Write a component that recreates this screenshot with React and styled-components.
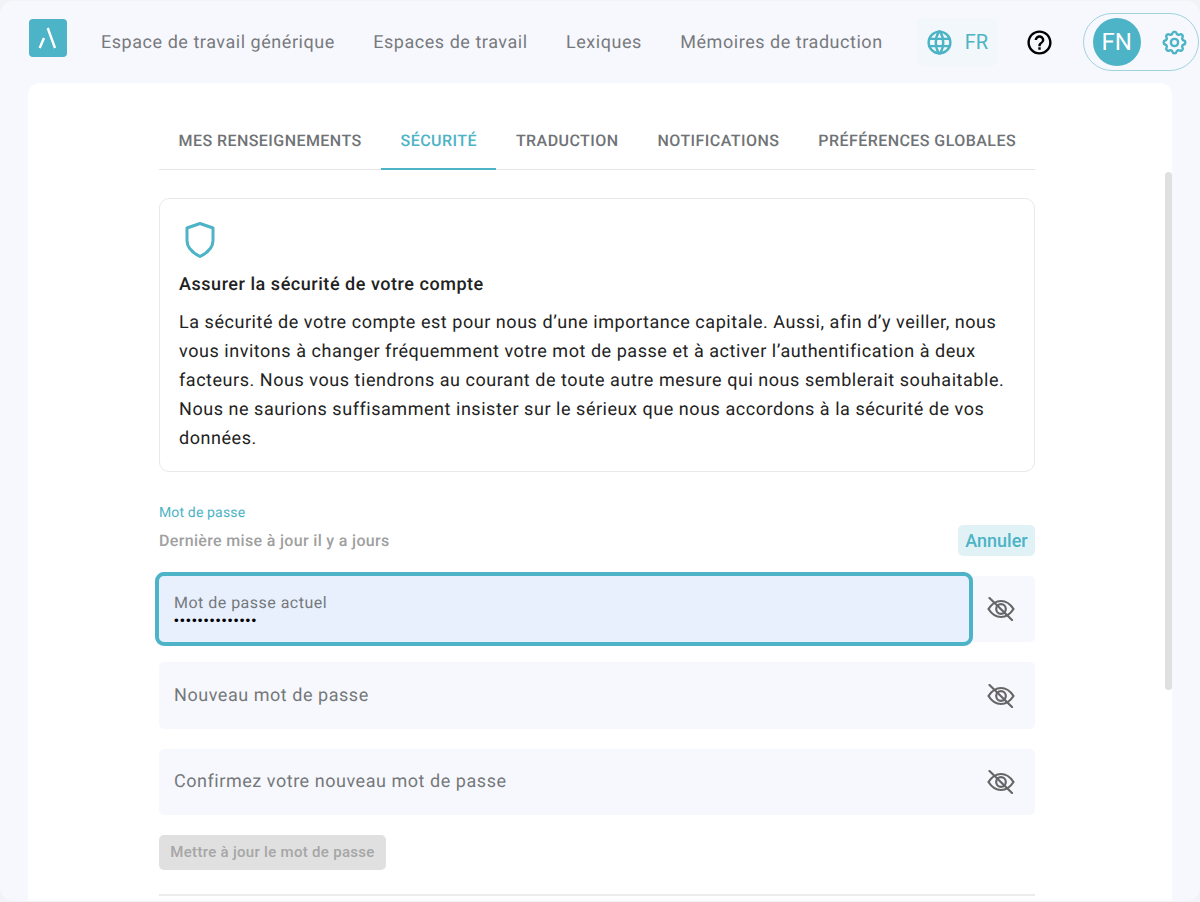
import React from 'react'
import styled, { createGlobalStyle } from 'styled-components'
import { TbWorld, TbSettings } from 'react-icons/tb'
import { MdHelpOutline } from 'react-icons/md'

const teal = '#4db3c6'

const GlobalStyle = createGlobalStyle`
  * {
    box-sizing: border-box;
  }
  html, body {
    margin: 0;
    height: 902px;
    overflow: hidden;
    background: #f3f3f7;
    font-family: Roboto, 'Liberation Sans', sans-serif;
    text-rendering: geometricPrecision;
  }
`
const Page = styled.div`
  display: flex;
  flex-direction: column;
  height: 900px;
  margin-top: 1px;
  border-radius: 14px;
  background: #f7f8fd;
`
const Header = styled.header`
  display: flex;
  align-items: center;
  height: 82px;
  padding: 0 1px 0 29px;
`
const Logo = styled.div`
  display: flex;
  align-items: center;
  justify-content: center;
  flex-shrink: 0;
  width: 38px;
  height: 38px;
  margin: 0 34px 8px 0;
  border-radius: 4px;
  background: ${teal};
`
const Nav = styled.nav`
  display: flex;
  flex-shrink: 0;
  gap: 38.4px;
  margin-right: 34px;
  padding-top: 2px;
`
const NavLink = styled.a`
  color: #777a7d;
  font-size: 18px;
  line-height: 24px;
  letter-spacing: 0.03em;
  white-space: nowrap;
`
const LangButton = styled.button`
  display: flex;
  align-items: center;
  flex-shrink: 0;
  gap: 11px;
  width: 80px;
  height: 48px;
  padding: 0 0 0 8px;
  border: none;
  border-radius: 5px;
  background: #f1f7fa;
  color: ${teal};
  font: 400 20px Roboto, sans-serif;
`
const HelpButton = styled.button`
  display: flex;
  flex-shrink: 0;
  padding: 0;
  margin: 0 28.5px;
  border: none;
  background: none;
  color: #000;
`
const ProfilePill = styled.div`
  display: flex;
  align-items: center;
  justify-content: space-between;
  flex-shrink: 0;
  width: 116px;
  height: 58px;
  padding: 0 9px 0 9px;
  border: 1px solid #9fd3de;
  border-radius: 29px;
  color: ${teal};
`
const Avatar = styled.div`
  display: flex;
  align-items: center;
  justify-content: center;
  width: 48px;
  height: 48px;
  border-radius: 50%;
  background: ${teal};
  color: #fff;
  font-size: 24px;
`
const Panel = styled.main`
  position: relative;
  flex: 1;
  margin: 0 28px;
  padding: 29px 137px 0 131px;
  overflow: hidden;
  border-radius: 12px 12px 0 0;
  background: #fff;
`
const ScrollThumb = styled.div`
  position: absolute;
  top: 89px;
  right: 0;
  width: 7px;
  height: 518px;
  border-radius: 4px;
  background: #e0e0e0;
`
const Tabs = styled.div`
  display: flex;
  height: 58px;
  border-bottom: 1px solid #e6e6e6;
`
const Tab = styled.a`
  display: flex;
  align-items: center;
  flex-shrink: 0;
  height: 58px;
  padding: 0 19.5px;
  border-bottom: 2px solid ${props => (props.$active ? teal : 'transparent')};
  color: ${props => (props.$active ? teal : '#707376')};
  font-size: 16px;
  font-weight: 500;
  letter-spacing: 0.44px;
  text-transform: uppercase;
  white-space: nowrap;
`
const InfoCard = styled.section`
  height: 274px;
  margin-top: 28px;
  padding: 23px 19px 0;
  border: 1px solid #e8e8e8;
  border-radius: 10px;
`
const ShieldWrap = styled.div`
  display: flex;
  height: 41px;
  padding-left: 6px;
  color: ${teal};
`
const InfoTitle = styled.h2`
  margin: 10px 0 0;
  color: #222;
  font-size: 18px;
  font-weight: 500;
  line-height: 24px;
  letter-spacing: 0.03em;
`
const InfoText = styled.p`
  margin: 11px 0 0;
  color: #222;
  font-size: 18px;
  line-height: 29px;
  letter-spacing: 0.03em;
`
const SectionLabel = styled.div`
  margin-top: 33px;
  color: ${teal};
  font-size: 14px;
  line-height: 16px;
  letter-spacing: 0.15px;
`
const SectionHead = styled.div`
  display: flex;
  align-items: center;
  justify-content: space-between;
  height: 31px;
  margin-top: 4px;
`
const UpdatedAt = styled.span`
  color: #a0a0a0;
  font-size: 16px;
  font-weight: 500;
  letter-spacing: 0.33px;
`
const CancelButton = styled.button`
  width: 77px;
  height: 31px;
  padding: 0;
  border: none;
  border-radius: 5px;
  background: #e1f2f7;
  color: ${teal};
  font: 500 18px Roboto, sans-serif;
`
const FieldList = styled.div`
  display: flex;
  flex-direction: column;
  gap: 20px;
  margin-top: 20px;
`
const Field = styled.div`
  display: flex;
  align-items: center;
  height: 66.4px;
  border-radius: 5px;
  background: #f7f8fd;
`
const FieldBody = styled.label`
  display: flex;
  flex: 1;
  flex-direction: column;
  justify-content: center;
  align-self: stretch;
  padding-left: 15px;
  border-radius: 5px;
  ${props =>
    props.$focused &&
    `
    padding-top: 2px;
    background: #e8f0fe;
    outline: 4px solid ${teal};
    outline-offset: 0;
  `}
`
const FieldLabel = styled.span`
  color: #75787b;
  font-size: 18px;
  line-height: 22px;
  letter-spacing: 0.03em;
`
const FieldSmallLabel = styled(FieldLabel)`
  font-size: 16px;
  line-height: 20px;
`
const PasswordInput = styled.input`
  width: 300px;
  height: 14px;
  padding: 0;
  border: none;
  outline: none;
  background: transparent;
  color: #000;
  font-size: 13.33px;
  letter-spacing: 1.3px;
`
const EyeButton = styled.button`
  display: flex;
  align-items: center;
  justify-content: center;
  width: 66px;
  height: 100%;
  padding: 0 2px 0 0;
  border: none;
  background: none;
  color: #666;
`
const SubmitButton = styled.button`
  display: block;
  width: 227px;
  height: 35px;
  margin-top: 20px;
  padding: 0 0 1px;
  border: none;
  border-radius: 5px;
  background: #e0e0e0;
  color: #a6a6a6;
  font: 500 15px Roboto, sans-serif;
  letter-spacing: 0.3px;
`
const Divider = styled.hr`
  height: 2px;
  margin: 24px 0 0;
  border: none;
  background: #ececec;
`

const LogoMark = () => (
  <svg width="38" height="38" viewBox="0 0 38 38" fill="none" stroke="#fff" strokeWidth="2.4">
    <path d="M18.700 9 26 29" />
    <path d="M15 19 10.700 29" />
  </svg>
)

const ShieldIcon = () => (
  <svg width="30" height="36" viewBox="0 0 30 36" fill="none" stroke="currentColor" strokeWidth="3" strokeLinejoin="round">
    <path d="M15 1.500 28 6V18.500C28 26 22 31 15 34.500 8 31 2 26 2 18.500V6Z" />
  </svg>
)

const EyeOff = () => (
  <svg width="28" height="24" viewBox="0 0 28 24" fill="none" stroke="currentColor" strokeWidth="2.2" strokeLinecap="round">
    <path d="M1.500 12C5 6.500 9.200 4 14 4s9 2.500 12.500 8c-3.500 5.500-7.700 8-12.500 8S5 17.500 1.500 12Z" />
    <circle cx="14" cy="12" r="4.800" />
    <path d="M2.500 1 25 23" />
  </svg>
)

const NAV_ITEMS = ['Espace de travail générique', 'Espaces de travail', 'Lexiques', 'Mémoires de traduction']
const TABS = ['Mes renseignements', 'Sécurité', 'Traduction', 'Notifications', 'Préférences globales']

export default function App() {
  return (
    <Page>
      <GlobalStyle />
      <Header>
        <Logo>
          <LogoMark />
        </Logo>
        <Nav>
          {NAV_ITEMS.map(item => (
            <NavLink key={item}>{item}</NavLink>
          ))}
        </Nav>
        <LangButton>
          <TbWorld size={29} />
          FR
        </LangButton>
        <HelpButton>
          <MdHelpOutline size={29} />
        </HelpButton>
        <ProfilePill>
          <Avatar>FN</Avatar>
          <TbSettings size={29} />
        </ProfilePill>
      </Header>
      <Panel>
        <ScrollThumb />
        <Tabs>
          {TABS.map(tab => (
            <Tab key={tab} $active={tab === 'Sécurité'}>
              {tab}
            </Tab>
          ))}
        </Tabs>
        <InfoCard>
          <ShieldWrap>
            <ShieldIcon />
          </ShieldWrap>
          <InfoTitle>Assurer la sécurité de votre compte</InfoTitle>
          <InfoText>
            La sécurité de votre compte est pour nous d’une importance capitale. Aussi, afin d’y veiller, nous
            vous invitons à changer fréquemment votre mot de passe et à activer l’authentification à deux
            facteurs. Nous vous tiendrons au courant de toute autre mesure qui nous semblerait souhaitable.
            Nous ne saurions suffisamment insister sur le sérieux que nous accordons à la sécurité de vos
            données.
          </InfoText>
        </InfoCard>
        <SectionLabel>Mot de passe</SectionLabel>
        <SectionHead>
          <UpdatedAt>Dernière mise à jour il y a jours</UpdatedAt>
          <CancelButton>Annuler</CancelButton>
        </SectionHead>
        <FieldList>
          <Field>
            <FieldBody $focused>
              <FieldSmallLabel>Mot de passe actuel</FieldSmallLabel>
              <PasswordInput type="password" value="motdepasse123!" readOnly />
            </FieldBody>
            <EyeButton>
              <EyeOff />
            </EyeButton>
          </Field>
          <Field>
            <FieldBody>
              <FieldLabel>Nouveau mot de passe</FieldLabel>
            </FieldBody>
            <EyeButton>
              <EyeOff />
            </EyeButton>
          </Field>
          <Field>
            <FieldBody>
              <FieldLabel>Confirmez votre nouveau mot de passe</FieldLabel>
            </FieldBody>
            <EyeButton>
              <EyeOff />
            </EyeButton>
          </Field>
        </FieldList>
        <SubmitButton>Mettre à jour le mot de passe</SubmitButton>
        <Divider />
      </Panel>
    </Page>
  )
}
